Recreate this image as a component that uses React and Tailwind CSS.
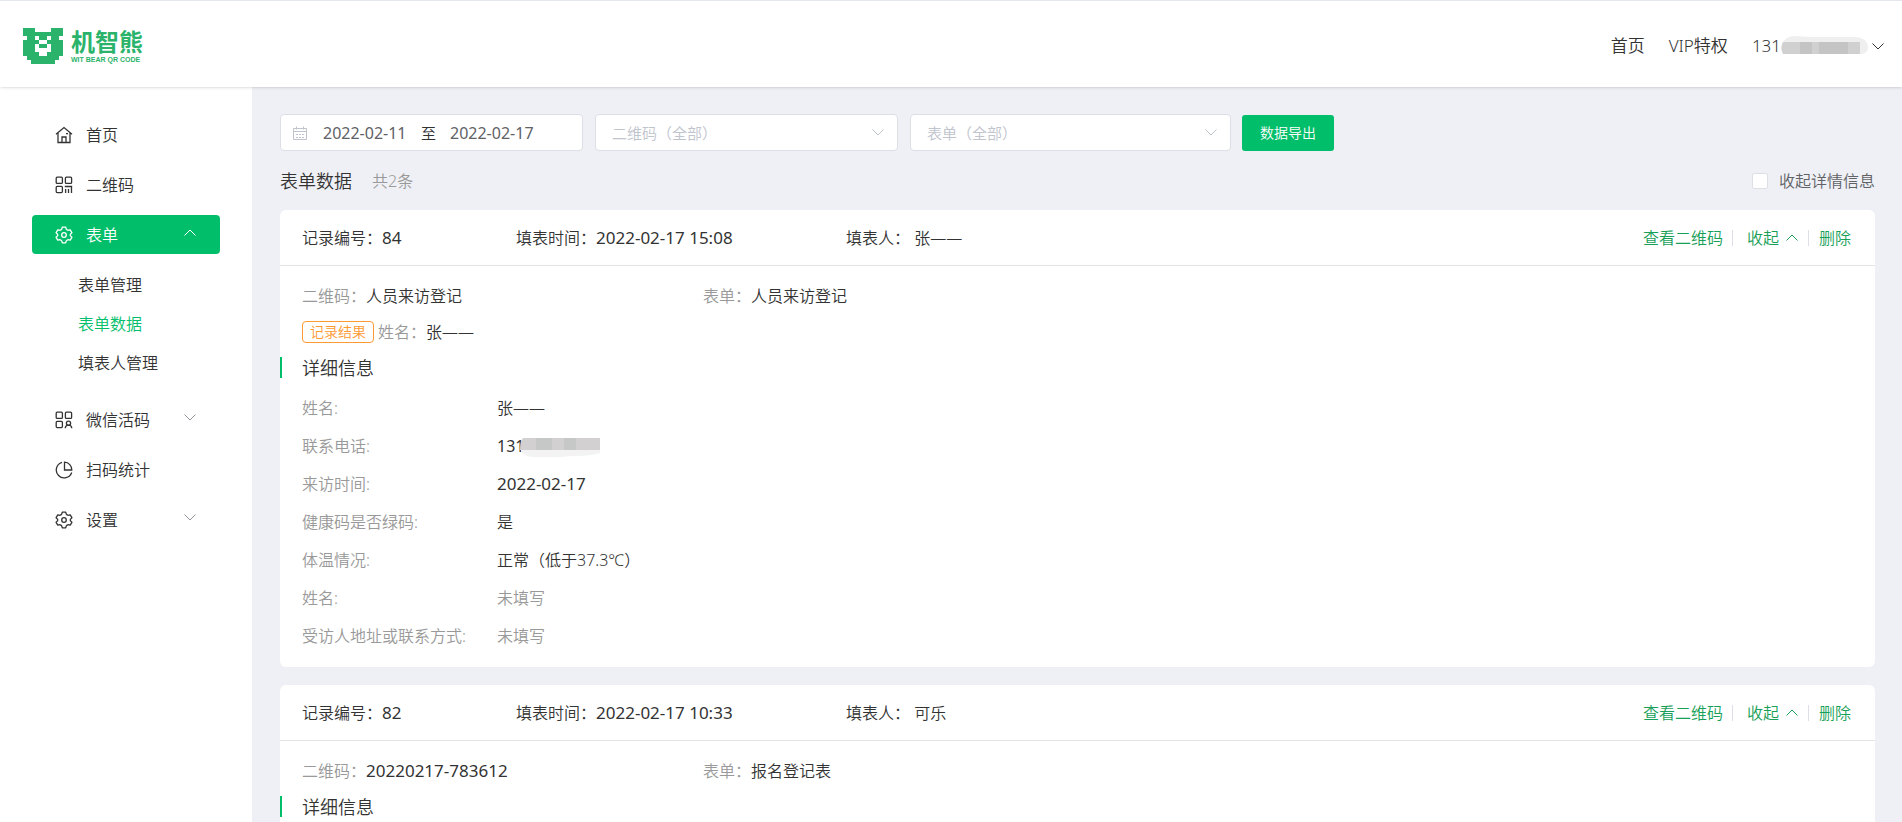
import { useState } from "react";
import clsx from "clsx";

const Chevron = ({ up, className }) => (
  <svg viewBox="0 0 12 7" className={clsx("shrink-0", className)} fill="none" stroke="currentColor" aria-hidden="true">
    <path d={up ? "M0.5 6.5 6 1l5.5 5.5" : "M0.5 0.5 6 6l5.5-5.5"} />
  </svg>
);

const iconProps = {
  viewBox: "0 0 18 18",
  className: "w-[18px] h-[18px] shrink-0",
  fill: "none",
  stroke: "currentColor",
  strokeWidth: 1.3,
  "aria-hidden": true,
};

const HomeIcon = () => (
  <svg {...iconProps}>
    <path d="M1 8.2 9 1.5l8 6.7M3 7v9.5h12V7M7 16.5V11h4v5.5M11 7.6h2" />
  </svg>
);

const QrIcon = () => (
  <svg {...iconProps}>
    <rect x="1.2" y="1.2" width="6.2" height="6.2" rx="1" />
    <rect x="10.4" y="1.2" width="6.2" height="6.2" rx="1" />
    <rect x="1.2" y="10.4" width="6.2" height="6.2" rx="1" />
    <path d="M9.8 10.5h7.4M10.6 13v4M13.5 13v4M16.5 10.5V17" />
  </svg>
);

const LiveCodeIcon = () => (
  <svg {...iconProps}>
    <rect x="1.2" y="1.2" width="6.2" height="6.2" rx="1" />
    <rect x="10.4" y="1.2" width="6.2" height="6.2" rx="1" />
    <rect x="1.2" y="10.4" width="6.2" height="6.2" rx="1" />
    <circle cx="13.5" cy="12.2" r="2.1" />
    <path d="M10.2 17.2c.2-2 1.5-3 3.3-3s3.1 1 3.3 3" />
  </svg>
);

const GearIcon = () => (
  <svg {...iconProps}>
    <path
      d="M7.3 1.2h3.4l.7 2.2 1.5.9 2.3-.5 1.7 2.9-1.6 1.7v1.2l1.6 1.7-1.7 2.9-2.3-.5-1.5.9-.7 2.2H7.3l-.7-2.2-1.5-.9-2.3.5-1.700-2.900 1.600-1.700V8.400L1.100 6.700l1.700-2.900 2.300.5 1.500-.9z"
      strokeLinejoin="round"
    />
    <circle cx="9" cy="9" r="2.3" />
  </svg>
);

const PieIcon = () => (
  <svg {...iconProps}>
    <path d="M7 1.4A7.9 7.9 0 1 0 16.7 11.5" />
    <path d="M9.5 1.2v7.8h7.3a7.5 7.5 0 0 0-7.3-7.8z" />
  </svg>
);

const CalendarIcon = () => (
  <svg viewBox="0 0 14 14" className="w-[14px] h-[14px] shrink-0 text-[#c0c4cc]" fill="none" stroke="currentColor" aria-hidden="true">
    <path d="M0.5 2.5h13v11H0.5zM0.5 5.5h13M3.5 0.5v3M10.5 0.5v3M3 8.5h2M6 8.5h2M9 8.5h2M3 11.5h2M6 11.5h2M9 11.5h2" />
  </svg>
);

const BEAR = [
  "###....###",
  "##########",
  ".##.##.##.",
  "####..####",
  "###.##.###",
  "###....###",
  "####..####",
  ".########.",
  "..######..",
];

const Logo = () => (
  <a href="#home" className="flex items-center gap-2 text-[#2bb36b]">
    <svg viewBox="0 0 40 36" className="w-10 h-9" fill="currentColor" shapeRendering="crispEdges" aria-hidden="true">
      {BEAR.map((row, y) =>
        [...row].map((c, x) => c === "#" && <rect key={`${x}-${y}`} x={x * 4} y={y * 4} width="4" height="4" />)
      )}
    </svg>
    <span className="flex flex-col">
      <span className="text-[24px] leading-7 font-bold">机智熊</span>
      <span className="text-[7px] leading-[8px] font-bold font-['Liberation_Sans',sans-serif]">WIT BEAR QR CODE</span>
    </span>
  </a>
);

const MENU = [
  { label: "首页", icon: HomeIcon },
  { label: "二维码", icon: QrIcon },
  { label: "表单", icon: GearIcon, children: ["表单管理", "表单数据", "填表人管理"] },
  { label: "微信活码", icon: LiveCodeIcon, arrow: true },
  { label: "扫码统计", icon: PieIcon },
  { label: "设置", icon: GearIcon, arrow: true },
];

const RECORDS = [
  {
    id: 84,
    time: "2022-02-17 15:08",
    person: "张——",
    code: "人员来访登记",
    form: "人员来访登记",
    result: "张——",
    details: [
      { label: "姓名", value: "张——" },
      { label: "联系电话", value: "131", masked: true },
      { label: "来访时间", value: "2022-02-17", numeric: true },
      { label: "健康码是否绿码", value: "是" },
      { label: "体温情况", value: "正常（低于37.3℃）" },
      { label: "姓名" },
      { label: "受访人地址或联系方式" },
    ],
  },
  { id: 82, time: "2022-02-17 10:33", person: "可乐", code: "20220217-783612", form: "报名登记表", details: [] },
];

const Sidebar = () => (
  <aside className="w-[252px] shrink-0 bg-white pt-7 px-8 text-[16px]">
    <nav className="flex flex-col gap-[11px]">
      {MENU.map(({ label, icon: Icon, children, arrow }) => (
        <div key={label}>
          <a
            href={`#${label}`}
            className={clsx(
              "flex items-center h-[39px] w-[188px] pl-[23px] pr-6 gap-[13px] rounded",
              children && "bg-[#00be69] text-white"
            )}
          >
            <Icon />
            <span className="flex-1">{label}</span>
            {children && <Chevron up className="w-3 h-[7px] mb-1" />}
            {arrow && <Chevron className="w-3 h-[7px] mb-1 text-[#909399]" />}
          </a>
          {children && (
            <ul className="pt-[11px] pb-[7px]">
              {children.map((c) => (
                <li key={c}>
                  <a href={`#${c}`} className={clsx("flex items-center h-[39px] pl-[46px]", c === "表单数据" && "text-[#00be69]")}>
                    {c}
                  </a>
                </li>
              ))}
            </ul>
          )}
        </div>
      ))}
    </nav>
  </aside>
);

const FilterSelect = ({ label, className }) => (
  <div className={clsx("relative", className)}>
    <select aria-label={label} className="w-full h-[37px] pl-4 appearance-none rounded border border-[#dcdfe6] bg-white text-[15px] text-[#c0c4cc]">
      <option>{label}（全部）</option>
    </select>
    <Chevron className="absolute right-[14px] top-[15px] w-3 h-[7px] text-[#c0c4cc]" />
  </div>
);

const MaskedDigits = () => (
  <svg viewBox="0 0 80 24" className="w-20 h-6 -ml-1" aria-hidden="true">
    <path d="M0 15h80v4q-8 3-24 3-8 0-16 1H12Q3 22 0 15z" fill="#f3f3f3" />
    <path d="M3 4h77v12H0Q0 7 3 4z" fill="#d2d0d1" />
    <path d="M16 4h16v12H16zM44 4h12v12H44z" fill="#c6c7c7" />
  </svg>
);

const RecordCard = ({ record, collapsed }) => {
  const [open, setOpen] = useState(true);
  const visible = open && !collapsed;

  return (
    <section className="rounded-md bg-white overflow-hidden">
      <header className="flex items-center h-14 pl-[22px] pr-6 border-b border-[#e4e4e4]">
        <span className="w-[214px]">记录编号：<span className="text-[17px] font-normal">{record.id}</span></span>
        <span className="w-[330px]">填表时间：<span className="text-[17px] font-normal">{record.time}</span></span>
        <span className="flex-1">填表人： {record.person}</span>
        <div className="flex items-center text-[#18a058]">
          <button type="button">查看二维码</button>
          <span className="w-px h-4 ml-[9px] mr-[14px] bg-[#dcdfe6]" />
          <button type="button" className="flex items-center gap-[7px]" onClick={() => setOpen(!open)}>
            收起
            <Chevron up={open} className="w-3 h-[7px]" />
          </button>
          <span className="w-px h-4 mx-[10px] bg-[#dcdfe6]" />
          <button type="button">删除</button>
        </div>
      </header>
      {visible && (
        <div className="py-3">
          <div className="flex items-center h-9 px-[22px]">
            <span className="w-[401px]">
              <span className="text-[#999]">二维码：</span>
              <span className={clsx(/^\d/.test(record.code) && "text-[17px] font-normal")}>{record.code}</span>
            </span>
            <span><span className="text-[#999]">表单：</span>{record.form}</span>
          </div>
          {record.result && (
            <div className="flex items-center h-9 px-[22px]">
              <span className="mr-1 px-[7px] rounded border border-[#ff9933] text-[14px] leading-5 text-[#ff9933]">记录结果</span>
              <span className="text-[#999]">姓名：</span>{record.result}
            </div>
          )}
          <div className="flex items-center h-[35px] gap-5">
            <span className="w-[2px] h-[21px] bg-[#00be69]" />
            <h3 className="text-[18px]">详细信息</h3>
          </div>
          <dl className="pt-1 px-[22px]">
            {record.details.map((d, i) => (
              <div key={i} className="flex items-center h-[38px]">
                <dt className="w-[195px] text-[#999]">{d.label}:</dt>
                <dd
                  className={clsx(
                    "flex items-center",
                    !d.value && "text-[#999]",
                    d.masked && "font-normal",
                    d.numeric && "text-[17px] font-normal"
                  )}
                >
                  {d.value || "未填写"}
                  {d.masked && <MaskedDigits />}
                </dd>
              </div>
            ))}
          </dl>
        </div>
      )}
    </section>
  );
};

const App = () => {
  const [collapsed, setCollapsed] = useState(false);

  return (
    <div className="flex flex-col h-screen overflow-hidden bg-[#eff0f5] font-['Noto_Sans','Noto_Sans_CJK_SC',sans-serif] font-[350] text-[16px] leading-6 text-[#333]">
      <header className="relative z-10 flex items-center justify-between h-[87px] shrink-0 pl-[23px] pr-[18px] pt-1 bg-white border-t border-[#e4e7ed] shadow">
        <Logo />
        <nav className="flex items-center text-[17px]">
          <a href="#home" className="mr-6">首页</a>
          <a href="#vip" className="mr-6">VIP特权</a>
          <button type="button" className="flex items-center">
            131
            <svg viewBox="0 0 88 20" className="w-[88px] h-5 mr-[3px]" aria-hidden="true">
              <path d="M0 12Q2 0 14 0l16 1h40q16-1 17 10 0 6-6 7H2z" fill="#efefef" />
              <path d="M2 6h77v12H2q-3-6 0-12z" fill="#d0d0d0" />
              <path d="M19 6h12v12H19zM38 6h29v12H38z" fill="#c4c4c4" />
            </svg>
            <Chevron className="w-3 h-[7px]" />
          </button>
        </nav>
      </header>
      <div className="flex flex-1 min-h-0">
        <Sidebar />
        <main className="flex-1 min-w-0 overflow-y-auto pt-[27px] pl-7 pr-[27px]">
          <div className="flex items-center text-[15px]">
            <div className="flex items-center w-[303px] h-[37px] mr-3 px-3 rounded border border-[#dcdfe6] bg-white text-[#606266]">
              <CalendarIcon />
              <input aria-label="开始日期" defaultValue="2022-02-11" className="w-[84px] ml-4 text-[16px] font-normal outline-none" />
              <span className="mx-[14px] text-[#303133]">至</span>
              <input aria-label="结束日期" defaultValue="2022-02-17" className="w-[84px] text-[16px] font-normal outline-none" />
            </div>
            <FilterSelect label="二维码" className="w-[303px] mr-3" />
            <FilterSelect label="表单" className="w-[321px] mr-[11px]" />
            <button type="button" className="h-9 w-[92px] rounded-[3px] bg-[#00be69] text-[14px] text-white">数据导出</button>
          </div>
          <div className="flex items-center h-[59px]">
            <h2 className="text-[18px]">表单数据</h2>
            <span className="ml-5 text-[16px] text-[#999]">共2条</span>
            <label className="flex items-center gap-[11px] ml-auto text-[#606266]">
              <input
                type="checkbox"
                checked={collapsed}
                onChange={(e) => setCollapsed(e.target.checked)}
                className="appearance-none w-4 h-4 rounded-[2px] border border-[#dcdfe6] bg-white checked:bg-[#00be69]"
              />
              收起详情信息
            </label>
          </div>
          <div className="flex flex-col gap-[18px]">
            {RECORDS.map((r) => (
              <RecordCard key={r.id} record={r} collapsed={collapsed} />
            ))}
          </div>
        </main>
      </div>
    </div>
  );
};

export default App;
